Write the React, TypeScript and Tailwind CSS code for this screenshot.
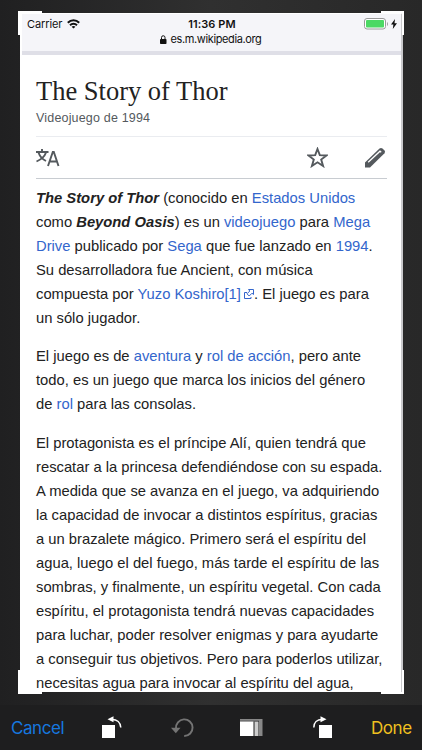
import type { ReactNode } from 'react'

export default function App() {
  return (
    <div className="flex h-[750px] w-[422px] flex-col overflow-hidden bg-[#1e1e1f] font-['Liberation_Sans',Arial,sans-serif]">
      {/* Crop area */}
      <main className="relative h-[705px] shrink-0 bg-linear-to-r from-[#202021] from-0% via-[#303030] via-50% to-[#282828] to-100% pt-[13px] pl-[20px]">
        <div className="flex h-[679px] w-[383px] flex-col overflow-hidden border-t border-r-2 border-l-2 border-white border-r-[#c9c9cc] bg-white">
          <StatusBar />
          <Article />
        </div>
        <CropCorners />
      </main>
      <Toolbar />
    </div>
  )
}

function StatusBar() {
  return (
    <header className="h-[41px] shrink-0 border-b-[4px] border-[#dfdfe7] bg-[#f5f5f9] text-[#111]">
      <div className="grid h-[20px] grid-cols-3 items-center pr-[4px] pl-[5px] font-['Inter','Liberation_Sans',sans-serif]">
        <div className="flex items-center gap-[5px] text-[11px] tracking-[-0.100px]">
          Carrier
          <svg width="13" height="10" viewBox="0 0 13 10" fill="none" stroke="#111" strokeWidth="2">
            <path d="M.8 3.800C4 .5 9 .5 12.200 3.800M3 6.200c2-2 5-2 7 0" />
            <path d="M6.500 9.500 4.600 7.700c1.100-1 2.700-1 3.800 0z" fill="#111" stroke="none" />
          </svg>
        </div>
        <div className="text-center text-[11px] font-semibold tracking-[0.100px] whitespace-nowrap">11:36 PM</div>
        <div className="flex items-center justify-end gap-[2px]">
          <svg width="25" height="12" viewBox="0 0 25 12">
            <rect x=".5" y=".5" width="21" height="10.500" rx="2.500" fill="#fff" stroke="#999" />
            <rect x="2" y="2" width="18" height="7.500" rx="1" fill="#4cd964" />
            <path d="M23 4v4c1.300-.6 1.300-3.400 0-4z" fill="#999" />
          </svg>
          <svg width="6" height="10" viewBox="0 0 6 10">
            <path d="M4 0 0 5.500h2.400L1.800 10 6 4.300H3.500z" fill="#111" />
          </svg>
        </div>
      </div>
      <div className="flex h-[11px] items-center justify-center gap-[4px] pr-[2px] font-['Inter','Liberation_Sans',sans-serif] text-[11px] tracking-[-0.380px]">
        <svg width="7" height="9" viewBox="0 0 7 9">
          <rect y="4" width="6.500" height="5" rx=".8" fill="#111" />
          <path d="M1.500 4V2.500a1.750 1.750 0 0 1 3.500 0V4" fill="none" stroke="#111" />
        </svg>
        es.m.wikipedia.org
      </div>
    </header>
  )
}

function Article() {
  return (
    <article className="w-[365px] pl-[14px] text-[#222]">
      <h1 className="mt-[19px] h-[34px] font-['Liberation_Serif',Georgia,serif] text-[26.500px] leading-[34px] whitespace-nowrap">
        The Story of Thor
      </h1>
      <p className="h-[20px] text-[12.500px] leading-[20px] tracking-[0.180px] text-[#54595d]">Videojuego de 1994</p>
      <div className="mt-[8px] flex h-[43px] items-center border-t border-b border-t-[#eaecf0] border-b-[#c8ccd1] text-[#54595d]">
        <svg width="24" height="20" viewBox="0 0 24 20" fill="none" stroke="currentColor" strokeWidth="1.900">
          <path d="M0 4h12.500M6 1v3M2.500 4.500C4 9 7 11.500 10 13M10 4.500C8.500 9 5 11.500.5 13.500" />
          <path d="m12 18 4.800-14h1l4.700 14M13.500 13.500h7.500" />
        </svg>
        <svg className="mr-[37px] ml-auto" width="21" height="21" viewBox="0 0 21 21" fill="none" stroke="currentColor" strokeWidth="1.900">
          <path d="m10.500 2 2.300 6.200 6.700.3-5.300 4 1.900 6.500-5.600-3.700L4.900 19l1.900-6.500-5.300-4 6.700-.3z" />
        </svg>
        <svg className="mr-px" width="21" height="21" viewBox="0 0 21 21">
          <path d="M0 20.500v-5L14.500 1.500q1.500-1.200 3 0l2 2q1.200 1.300 0 2.700L5 20.500z" fill="currentColor" />
          <path d="M3.200 15.200 15 4.200l1.200 1" fill="none" stroke="#fff" strokeWidth="1.300" />
        </svg>
      </div>
      <div className="mt-[7px] space-y-[14.300px] text-[14.780px] leading-[24px] whitespace-nowrap">
        <p>
          <b><i>The Story of Thor</i></b> (conocido en <Link>Estados Unidos</Link><br />
          como <b><i>Beyond Oasis</i></b>) es un <Link>videojuego</Link> para <Link>Mega</Link><br />
          <Link>Drive</Link> publicado por <Link>Sega</Link> que fue lanzado en <Link>1994</Link>.<br />
          Su desarrolladora fue Ancient, con música<br />
          compuesta por <Link>Yuzo Koshiro[1]<ExternalIcon /></Link>. El juego es para<br />
          un sólo jugador.
        </p>
        <p>
          El juego es de <Link>aventura</Link> y <Link>rol de acción</Link>, pero ante<br />
          todo, es un juego que marca los inicios del género<br />
          de <Link>rol</Link> para las consolas.
        </p>
        <p>
          El protagonista es el príncipe Alí, quien tendrá que<br />
          rescatar a la princesa defendiéndose con su espada.<br />
          A medida que se avanza en el juego, va adquiriendo<br />
          la capacidad de invocar a distintos espíritus, gracias<br />
          a un brazalete mágico. Primero será el espíritu del<br />
          agua, luego el del fuego, más tarde el espíritu de las<br />
          sombras, y finalmente, un espíritu vegetal. Con cada<br />
          espíritu, el protagonista tendrá nuevas capacidades<br />
          para luchar, poder resolver enigmas y para ayudarte<br />
          a conseguir tus objetivos. Pero para poderlos utilizar,<br />
          necesitas agua para invocar al espíritu del agua,
        </p>
      </div>
    </article>
  )
}

function Link({ children }: { children: ReactNode }) {
  return <span className="text-[#3366cc]">{children}</span>
}

function ExternalIcon() {
  return (
    <svg className="ml-[3px] inline-block align-[0px]" width="10" height="10" viewBox="0 0 10 10" fill="none" stroke="currentColor">
      <path d="M3 3.500H.5v6H7V8" />
      <path d="M4.500.5h5v5L8 4.200 5.200 7 3 4.800 5.800 2z" />
    </svg>
  )
}

// Handles sit over the corners of the cropped page
function CropCorners() {
  return (
    <>
      <div className="absolute top-[11px] left-[18px] h-[24px] w-[24px] border-t-2 border-l-[3px] border-white" />
      <div className="absolute top-[11px] left-[381px] h-[24px] w-[23px] border-t-2 border-r-2 border-white" />
      <div className="absolute top-[670px] left-[18px] h-[24px] w-[24px] border-b-2 border-l-[3px] border-white" />
      <div className="absolute top-[670px] left-[381px] h-[24px] w-[23px] border-r-2 border-b-2 border-white" />
    </>
  )
}

function Toolbar() {
  return (
    <footer className="flex h-[45px] items-center bg-[#1e1e1f] pl-[11px] font-['Inter','Liberation_Sans',sans-serif] text-[17px]">
      <button className="w-[91px] pt-[2px] text-left tracking-[-0.450px] text-[#1677df]">Cancel</button>
      <svg width="20" height="24" viewBox="0 0 20 24" fill="none">
        <path d="M0 9h13v13H0z" fill="#fff" />
        <path d="M10 3.500c5 0 8.500 3 8.800 8" stroke="#fff" strokeWidth="1.500" />
        <path d="M5.500 3.200 11.500.2v6z" fill="#fff" />
      </svg>
      <svg className="ml-[49px]" width="23" height="22" viewBox="0 0 23 22" fill="none">
        <path d="M5 11.500A8.300 8.300 0 1 1 13.200 19" stroke="#747474" strokeWidth="1.900" />
        <path d="M0 10.700h9.500l-4.700 5.600z" fill="#747474" />
      </svg>
      <svg className="ml-[46px]" width="24" height="18" viewBox="0 0 24 18">
        <path d="M0 0h22.500v17H0z" fill="#888" />
        <path d="M0 1.800h19V17H0z" fill="#1e1e1f" />
        <path d="M0 2.500h18.500V17H0z" fill="#ccc" />
        <path d="M0 2.500h14.500V17H0z" fill="#1e1e1f" />
        <path d="M0 2.500h13.500V17H0z" fill="#fff" />
      </svg>
      <svg className="ml-[49px]" width="20" height="24" viewBox="0 0 20 24" fill="none">
        <path d="M6 9h13v13H6z" fill="#fff" />
        <path d="M.8 11.500c0-5 3.500-8 8.200-8" stroke="#fff" strokeWidth="1.500" />
        <path d="M13.500 3.200 7.500.2v6z" fill="#fff" />
      </svg>
      <button className="ml-[38px] pt-[2px] tracking-[-0.450px] text-[#f0c020]">Done</button>
    </footer>
  )
}
